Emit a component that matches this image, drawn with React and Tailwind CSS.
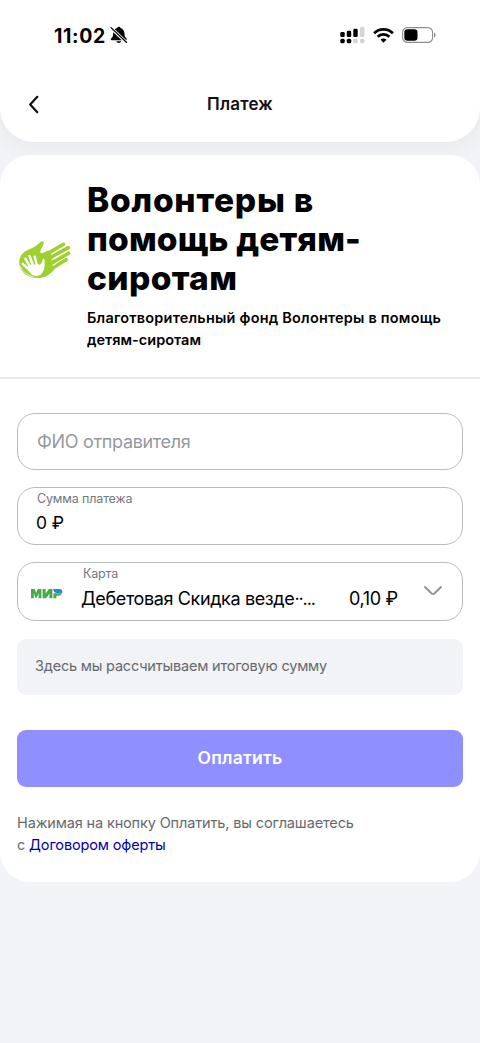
import React from "react";

function BellOff() {
  return (
    <svg width="18" height="18" viewBox="0 0 18 18" className="ml-[3px]">
      <path d="M8.800 .800c-.9 0-1.500.6-1.700 1.300C4.500 2.900 3.200 5.200 3.100 7.800c-.1 2.700-.7 3.500-1.800 4.500-.8.800-.5 1.900.5 1.900h14c1 0 1.300-1.100.5-1.900-1.100-1-1.700-1.800-1.800-4.500-.1-2.600-1.400-4.900-4-5.700C10.300 1.400 9.700.8 8.800.8z" fill="#000" />
      <path d="M6.400 15.200h4.800c-.3 1.100-1.200 1.700-2.400 1.700s-2.100-.6-2.400-1.700z" fill="#000" />
      <path d="M.4 1.400 16.600 16.700" stroke="#fff" strokeWidth="3.200" />
      <path d="M1 1.600 16.400 16.300" stroke="#000" strokeWidth="1.300" strokeLinecap="round" />
    </svg>
  );
}

function Signal() {
  return (
    <svg width="25" height="17" viewBox="0 0 25 17">
      <rect x="0.300" y="5" width="4.400" height="5" rx="1.300" />
      <rect x="6.800" y="3.700" width="4.400" height="6.300" rx="1.300" />
      <rect x="13.300" y="1.700" width="4.400" height="8.300" rx="1.300" />
      <rect x="20" y="0" width="4.400" height="10" rx="1.300" fill="#d4d4d4" />
      <rect x="0.300" y="11.800" width="4.400" height="4.400" rx="1.500" />
      <rect x="6.800" y="11.800" width="4.400" height="4.400" rx="1.500" />
      <rect x="13.300" y="11.800" width="4.400" height="4.400" rx="1.500" fill="#d4d4d4" />
      <rect x="20" y="11.800" width="4.400" height="4.400" rx="1.500" fill="#d4d4d4" />
    </svg>
  );
}

function Wifi() {
  return (
    <svg width="21" height="15" viewBox="0 0 21 15" className="ml-[8px]" fill="none" stroke="#000" strokeWidth="2.700">
      <path d="M1.100 5.300a13.300 13.300 0 0 1 18.800 0" />
      <path d="M4.600 8.800a8.300 8.300 0 0 1 11.800 0" />
      <path d="M10.500 14.800 7.500 11.800a4.200 4.200 0 0 1 6 0z" fill="#000" stroke="none" />
    </svg>
  );
}

function Battery() {
  return (
    <svg width="34" height="16" viewBox="0 0 34 16" className="ml-[8px]">
      <rect x="0.600" y="0.600" width="30" height="14.800" rx="4.800" fill="none" stroke="#8e8e8e" strokeWidth="1.100" />
      <rect x="2.300" y="2.300" width="13.200" height="11.400" rx="3.200" />
      <path d="M32 5.500c1 .4 1.600 1.400 1.600 2.500s-.6 2.100-1.600 2.500z" fill="#8e8e8e" />
    </svg>
  );
}

function HandsLogo() {
  return (
    <svg width="54" height="40" viewBox="0 0 54 40" fill="none" strokeLinecap="round" strokeLinejoin="round" className="mb-[13px]">
      <path d="M22.800 1.800c1.600-1.300 3.400-.1 2.800 1.900-.8 2.700-3 5.400-3.300 7.600-.2 1.500.8 2.200 2.300 1.600L30 10.500 36 15l1 12-1.500 3.500C31 35.500 26 38 19.500 38 9.500 38 1.200 31.500 1.200 22.500c0-8 5.800-11.700 11.300-13.800 4.800-1.800 7.300-4.300 10.300-6.900z" fill="#9ed02f" />
      <path d="M30 13.300 45.500 4.300M31 18.300 50.300 7.600M32 24 50.600 13.200M33.500 28.600 48 19.800" stroke="#9ed02f" strokeWidth="3.600" />
      <path d="M33.500 14.200 36 12.800M34 19.700 37 18M35 25.200 37.500 23.700" stroke="#fff" strokeWidth="1.300" />
      <path d="M11.500 26c4-1.600 9-.8 13.600-.8 1.500 5-1.500 10.300-6.600 10.300-4.600 0-6.800-3-8.500-6.500z" fill="#fff" stroke="#fff" />
      <path d="M4.800 23.800 11 29.500M7.500 18.800l5.200 9M11.500 16l4 11M16.700 16.700l2.500 10" stroke="#fff" strokeWidth="2.500" />
      <path d="M25.600 19.500c.5 3.200.7 6.500-.7 9.800-1.500-1.600-2.600-2.700-4.600-3.100 3-.5 4.600-3.500 5.300-6.700z" fill="#fff" stroke="#fff" strokeWidth="1.600" />
      <path d="M2.500 26.500c2.200 5.200 6.500 8.700 12.500 10" stroke="#fff" strokeWidth=".7" />
    </svg>
  );
}

function MirLogo() {
  return (
    <svg width="32" height="12" viewBox="0 0 32 12">
      <path d="M0 10.300V1h3c.5 0 .8.200 1 .7l1.200 3.200 1.200-3.200c.2-.5.500-.7 1-.7h3v9.300H7.600V4.900L6.100 9.300c-.1.300-.3.400-.6.400h-.7c-.3 0-.5-.1-.6-.4L2.800 4.900v5.400z" fill="#46aa4d" />
      <path d="M11.600 10.300V1h3v4.800l2.600-4.100c.3-.5.700-.7 1.200-.7h3v9.300h-3V5.500l-2.600 4.100c-.3.500-.7.700-1.200.7z" fill="#46aa4d" />
      <path d="M22.400 5.300h8.600c-.6 1.700-1.900 2.500-3.500 2.500h-2.100v2.500h-3z" fill="#46aa4d" />
      <path d="M22.200 1h6.200c2.100 0 3.300 1.500 2.900 3.900h-5.600c-1.900 0-3.300-1.400-3.500-3.900z" fill="#238bd0" />
    </svg>
  );
}

const field = "w-full rounded-[18px] border border-[#b9bcbf] bg-white";

export default function App() {
  return (
    <div className="min-h-[1043px] w-[480px] overflow-hidden bg-[#f1f3f6] font-['Inter',sans-serif] text-black">
      <header className="h-[142px] rounded-b-[34px] bg-white shadow-[0_2px_24px_rgba(30,35,60,0.06)]">
        <div className="flex h-[70px] items-center justify-between pr-[44px] pl-[54px]">
          <div className="flex items-center">
            <span className="w-[53px] pt-[2px] text-[19.500px] leading-6 font-bold tracking-[0.600px] whitespace-nowrap">11:02</span>
            <BellOff />
          </div>
          <div className="flex items-center">
            <Signal />
            <Wifi />
            <Battery />
          </div>
        </div>
        <div className="grid h-[68px] grid-cols-[60px_1fr_60px] items-center">
          <svg width="12" height="19" viewBox="0 0 12 19" className="ml-[28px]" fill="none" stroke="#111" strokeWidth="2.200" strokeLinecap="round" strokeLinejoin="round">
            <path d="M9.300 1.800 2.200 9.500l7.100 7.700" />
          </svg>
          <h1 className="text-center text-[17px] leading-6 font-semibold tracking-[0.2px] text-[#111]">Платеж</h1>
        </div>
      </header>

      <main className="mt-[13px] h-[727px] rounded-[30px] bg-white">
        <section className="flex h-[224px] items-center border-b-2 border-[#ebebed] pl-[18px]">
          <HandsLogo />
          <div className="ml-[15px]">
            <h2 className="text-[33.500px] leading-[39.200px] font-extrabold whitespace-nowrap">
              <span className="tracking-[0.750px]">Волонтеры в</span><br />
              <span className="tracking-[0.150px]">помощь детям-</span><br />
              <span className="tracking-[0.350px]">сиротам</span>
            </h2>
            <p className="mt-[9px] text-[14.500px] leading-[22px] font-semibold whitespace-nowrap">
              <span className="tracking-[0.200px]">Благотворительный фонд Волонтеры в помощь</span><br />детям-сиротам
            </p>
          </div>
        </section>

        <form className="flex flex-col px-[17px] pt-[34px]">
          <div className={field + " flex h-[57px] items-center px-[19px] text-[18px] tracking-[-0.330px] text-[#95999e]"}>
            <span>ФИО отправителя</span>
          </div>

          <div className={field + " mt-[17px] h-[58px] px-[18px] pt-[2px]"}>
            <div className="pl-px text-[12.500px] leading-[17px] tracking-[-0.150px] text-[#73777d]"><span>Сумма платежа</span></div>
            <div className="mt-[4px] text-[17.500px] leading-[24px] tracking-[-0.100px]"><span>0 ₽</span></div>
          </div>

          <div className={field + " mt-[17px] flex h-[59px] pl-[13px]"}>
            <div className="flex w-[50px] items-center pt-[4px]"><MirLogo /></div>
            <div className="w-[268px] pt-[2px]">
              <div className="pl-[2px] text-[12.500px] leading-[17px] tracking-[-0.150px] text-[#73777d]"><span>Карта</span></div>
              <div className="mt-[5px] text-[18px] leading-[24px] tracking-[-0.380px] whitespace-nowrap">
                <span>Дебетовая Скидка везде</span><span className="tracking-[-1.100px]">··...</span>
              </div>
            </div>
            <div className="w-[50px] pt-[24px] text-[18px] leading-[24px] tracking-[-0.350px] whitespace-nowrap"><span>0,10 ₽</span></div>
            <svg width="20" height="12" viewBox="0 0 20 12" className="mt-[22px] ml-[24px]" fill="none" stroke="#919599" strokeWidth="2" strokeLinecap="round" strokeLinejoin="round">
              <path d="m2 2 6.700 6.500q1.300 1.100 2.600 0L18 2" />
            </svg>
          </div>

          <div className="mt-[18px] flex h-[56px] items-center rounded-[9px] bg-[#f1f3f6] px-[18px] pb-[2px] text-[14.500px] tracking-[-0.200px] text-[#65696f]">
            <span>Здесь мы рассчитываем итоговую сумму</span>
          </div>

          <button type="button" className="mt-[35px] h-[57px] rounded-[9px] bg-[#8f8fff] text-[17.500px] font-semibold tracking-[0.250px] text-white">
            <span>Оплатить</span>
          </button>

          <p className="mt-[25px] text-[14.500px] leading-[22px] tracking-[-0.140px] text-[#65696f]">
            Нажимая на кнопку Оплатить, вы соглашаетесь<br />
            с <a href="#offer" className="text-[#0000a8]">Договором оферты</a>
          </p>
        </form>
      </main>
    </div>
  );
}
